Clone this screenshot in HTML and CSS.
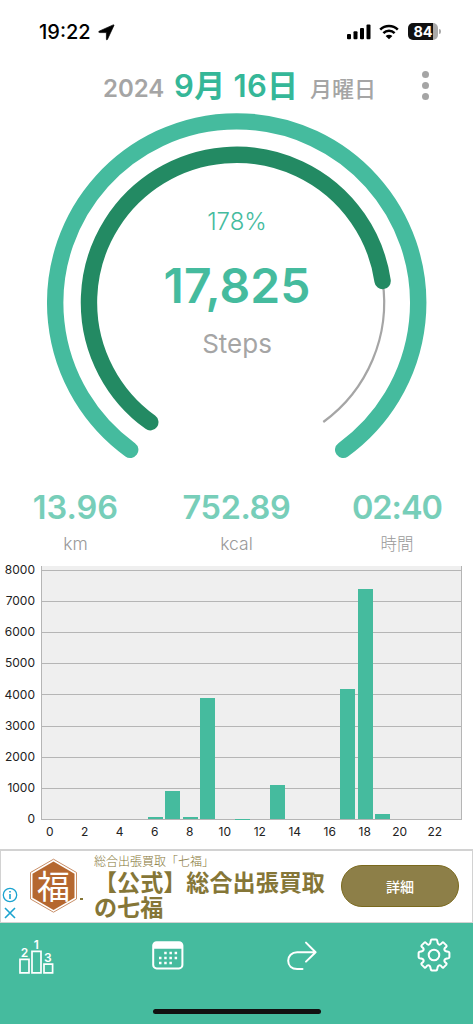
FILE: index.html
```
<!DOCTYPE html>
<html lang="ja">
<head>
    <meta charset="UTF-8">
    <meta name="viewport" content="width=device-width, initial-scale=1.0">
    <title>歩数計</title>
    <link rel="stylesheet" href="styles.css">
</head>
<body>
    <div class="app">
        <header class="status-bar">
            <div class="status-left">
                <span class="clock">19:22</span>
                <svg width="17" height="17" viewBox="0 0 17 17"><path d="M1.1 7.2 15.2.9q1-.3.7.7L9.4 15.5q-.7 1-1-.2V8.6H1.7Q0 8.3 1.1 7.2z" fill="#000" stroke="#000" stroke-width="0.7"/></svg>
            </div>
            <div class="status-right">
                <svg width="24" height="16" viewBox="0 0 24 16"><rect x="0" y="10" width="4" height="5.3" rx="1"/><rect x="6.5" y="7.2" width="4" height="8.1" rx="1"/><rect x="13" y="4" width="4" height="11.3" rx="1"/><rect x="19.5" y="0.4" width="4" height="14.9" rx="1"/></svg>
                <svg class="wifi" width="20" height="16" viewBox="0 0 20 16"><path d="M1.2 5.6a12.4 12.4 0 0 1 17.6 0M4.4 9.1a7.9 7.9 0 0 1 11.2 0" fill="none" stroke="#000" stroke-width="2.5"/><path d="M6.6 12a4.9 4.9 0 0 1 6.8 0L10 15.3z"/></svg>
                <div class="battery"><span>84</span></div>
            </div>
        </header>

        <div class="date-row">
            <span class="year">2024</span>
            <span class="day">9月 16日</span>
            <span class="weekday">月曜日</span>
            <div class="more"><i></i><i></i><i></i></div>
        </div>

        <section class="gauge">
            <svg width="474" height="370" viewBox="0 100 474 370" fill="none">
                <path d="M130.2 449.8A181.5 181.5 0 1 1 343.2 449.8" stroke="#45bb9e" stroke-width="16.4" stroke-linecap="round"/>
                <path d="M382.6 281A147.8 147.8 0 0 1 323.3 422" stroke="#a5a5a5" stroke-width="2.2"/>
                <path d="M150.3 422.2A147.6 147.6 0 1 1 382.6 281" stroke="#238a63" stroke-width="16.4" stroke-linecap="round"/>
            </svg>
            <div class="gauge-text">
                <div class="percent">178%</div>
                <div class="steps">17,825</div>
                <div class="unit">Steps</div>
            </div>
        </section>

        <section class="stats">
            <div class="stat"><b>13.96</b><span>km</span></div>
            <div class="stat"><b>752.89</b><span>kcal</span></div>
            <div class="stat"><b>02:40</b><span>時間</span></div>
        </section>

        <section class="chart">
            <div class="y-axis">
                <span>8000</span><span>7000</span><span>6000</span><span>5000</span><span>4000</span><span>3000</span><span>2000</span><span>1000</span><span>0</span>
            </div>
            <div class="plot">
                <div class="bar"></div>
                <div class="bar"></div>
                <div class="bar"></div>
                <div class="bar"></div>
                <div class="bar"></div>
                <div class="bar"></div>
                <div class="bar" style="height: 1.7px"></div>
                <div class="bar" style="height: 28px"></div>
                <div class="bar" style="height: 2.4px"></div>
                <div class="bar" style="height: 121.5px"></div>
                <div class="bar"></div>
                <div class="bar" style="height: 0.5px"></div>
                <div class="bar"></div>
                <div class="bar" style="height: 34.3px"></div>
                <div class="bar"></div>
                <div class="bar"></div>
                <div class="bar"></div>
                <div class="bar" style="height: 129.7px"></div>
                <div class="bar" style="height: 230.3px"></div>
                <div class="bar" style="height: 4.7px"></div>
                <div class="bar"></div>
                <div class="bar"></div>
                <div class="bar"></div>
                <div class="bar"></div>
            </div>
            <div class="x-axis">
                <span>0</span><span>2</span><span>4</span><span>6</span><span>8</span><span>10</span><span>12</span><span>14</span><span>16</span><span>18</span><span>20</span><span>22</span>
            </div>
        </section>

        <aside class="ad">
            <div class="ad-marks">
                <svg width="16" height="16" viewBox="0 0 16 16" fill="none" stroke="#1ba3cf" stroke-width="1.3"><circle cx="8" cy="8" r="6.7"/><path d="M8 7v5M8 4v1.6" stroke-width="1.6"/></svg>
                <svg width="16" height="16" viewBox="0 0 16 16" fill="none" stroke="#1ba3cf" stroke-width="1.6"><path d="M3 3l10 10M13 3L3 13"/></svg>
            </div>
            <div class="ad-logo">
                <svg width="56" height="56" viewBox="0 0 56 56">
                    <path d="M26.5 1.2 49.5 14.5V41L26.5 54.2 3.5 41V14.5z" fill="#fff" stroke="#c98f68" stroke-width="1"/>
                    <path d="M26.5 3.6 47.5 15.7V39.8L26.5 51.9 5.5 39.8V15.7z" fill="#b5672f"/>
                    <rect x="53" y="40" width="3" height="2" fill="#857637"/>
                </svg>
                <span>福</span>
            </div>
            <div class="ad-text">
                <small>総合出張買取「七福」</small>
                <strong>【公式】総合出張買取<br>の七福</strong>
            </div>
            <button class="ad-button">詳細</button>
        </aside>

        <nav class="tab-bar">
            <svg class="ranking" width="36" height="38" viewBox="0 0 36 38" fill="none" stroke="#fff" stroke-width="1.7">
                <path d="M2 23.4h9v13.4H2zM14 15.4h9v21.4h-9zM26 28.1h8.6v8.7H26z"/>
                <g fill="#fff" stroke="none" class="rank"><text x="6.4" y="21">2</text><text x="18.2" y="12.5">1</text><text x="29.9" y="25.8">3</text></g>
            </svg>
            <svg width="32" height="29" viewBox="0 0 32 29">
                <rect x="1.2" y="1.2" width="29.2" height="26.2" rx="3.4" fill="none" stroke="#fff" stroke-width="2"/>
                <path d="M1.2 7.7V4q0-3 3-3h23.2q3 0 3 3v3.7z" fill="#fff"/>
                <path d="M12.2 12h12.9M7 17h18.1M7 22h12.9" stroke="#fff" stroke-width="2.5" stroke-dasharray="2.5 2.7"/>
            </svg>
            <svg class="share" width="32" height="32" viewBox="0 0 32 32" fill="none" stroke="#fff" stroke-width="2" stroke-linecap="round" stroke-linejoin="round"><path d="M16.5 29h-5.3C5.6 29 2.2 25.6 2.2 20.8S5.6 12.2 11.2 12.2H29.6M20 2.6l9.6 9.6-9.6 9.4"/></svg>
            <svg width="34" height="34" viewBox="-17 -17 34 34" fill="none" stroke="#fff" stroke-width="2" stroke-linejoin="round">
                <circle r="5.3"/>
                <path d="M-2.2-15.4H2.2Q3-15.4 3.2-14.3C3.7-9.8 6-9.2 8.1-12.2Q8.8-13 9.6-12.4L12.4-9.6Q13-8.8 12.2-8.1C9.2-6 9.8-3.7 14.3-3.2Q15.4-3 15.4-2.2V2.2Q15.4 3 14.3 3.2C9.8 3.7 9.2 6 12.2 8.1Q13 8.8 12.4 9.6L9.6 12.4Q8.8 13 8.1 12.2C6 9.2 3.7 9.8 3.2 14.3Q3 15.4 2.2 15.4H-2.2Q-3 15.4-3.2 14.3C-3.7 9.8-6 9.2-8.1 12.2Q-8.8 13-9.6 12.4L-12.4 9.6Q-13 8.8-12.2 8.1C-9.2 6-9.8 3.7-14.3 3.2Q-15.4 3-15.4 2.2V-2.2Q-15.4-3-14.3-3.2C-9.8-3.7-9.2-6-12.2-8.1Q-13-8.8-12.4-9.6L-9.6-12.4Q-8.8-13-8.1-12.2C-6-9.2-3.7-9.8-3.2-14.3Q-3-15.4-2.2-15.4z"/>
            </svg>
            <div class="home-indicator"></div>
        </nav>
    </div>
</body>
</html>
```
FILE: styles.css
```
body {
    margin: 0;
    background-color: #fff;
    font-family: Inter, "Noto Sans CJK JP", sans-serif;
}
svg {
    display: block;
}
.app {
    width: 474px;
    height: 1024px;
    overflow: hidden;
}
.status-bar {
    display: flex;
    justify-content: space-between;
    align-items: center;
    height: 64px;
    box-sizing: border-box;
    padding: 0 36px 0 39px;
}
.status-left,
.status-right {
    display: flex;
    align-items: center;
}
.status-right {
    padding-bottom: 1px;
}
.clock {
    font-size: 20px;
    font-weight: 500;
    margin-right: 7px;
}
.wifi {
    margin: 0 9px 0 8px;
}
.battery {
    position: relative;
    width: 30px;
    height: 17px;
    border-radius: 5px;
    background: linear-gradient(to right, #111 84%, #aaa 84%);
    color: #fff;
    font-size: 14.5px;
    font-weight: 700;
    line-height: 17px;
    text-align: center;
}
.battery::after {
    content: "";
    position: absolute;
    right: -3px;
    top: 6px;
    width: 2px;
    height: 5px;
    border-radius: 0 2px 2px 0;
    background-color: #aaa;
}
.date-row {
    display: flex;
    align-items: baseline;
    height: 36px;
    padding-left: 103px;
    color: #a5a5a5;
    line-height: 44px;
    white-space: nowrap;
}
.year {
    width: 71px;
    font-size: 24px;
    font-weight: 600;
}
.day {
    width: 136px;
    font-size: 31px;
    font-weight: 600;
    letter-spacing: 0.3px;
    color: #35b798;
}
.weekday {
    font-size: 22px;
    font-weight: 500;
}
.more {
    display: flex;
    flex-direction: column;
    align-self: flex-start;
    gap: 4px;
    margin: 7px 0 0 46px;
}
.more i {
    width: 7px;
    height: 7px;
    border-radius: 50%;
    background-color: #a5a5a5;
}
.gauge {
    display: grid;
    height: 370px;
}
.gauge > * {
    grid-area: 1 / 1;
}
.gauge-text {
    padding-top: 107px;
    text-align: center;
    color: #45bb9e;
}
.percent {
    font-size: 24px;
    font-weight: 300;
    line-height: 30px;
}
.steps {
    margin-top: 19px;
    font-size: 48px;
    font-weight: 600;
    line-height: 60px;
}
.unit {
    margin-top: 13px;
    font-size: 26px;
    line-height: 30px;
    color: #a5a5a5;
}
.stats {
    display: flex;
    height: 96px;
}
.stat {
    display: flex;
    flex-direction: column;
    align-items: center;
    width: 171px;
    padding-top: 18px;
}
.stat:first-child {
    width: 151px;
}
.stat:last-child {
    width: 150px;
}
.stat b {
    font-size: 32.5px;
    font-weight: 600;
    line-height: 40px;
    letter-spacing: -0.4px;
    color: #77ceb9;
}
.stat:first-child b {
    letter-spacing: 0;
}
.stat:last-child b {
    letter-spacing: -1px;
}
.stat span {
    margin-top: 4px;
    font-size: 17.5px;
    font-weight: 300;
    line-height: 24px;
    color: #999;
}
.stat:last-child span {
    font-size: 16.5px;
}
.chart {
    display: grid;
    grid-template-columns: 41px 421px;
    grid-template-rows: 254px 29px;
    height: 283px;
    font-size: 12px;
    color: #222;
}
.y-axis {
    display: flex;
    flex-direction: column;
    margin-top: -12px;
    padding-right: 6px;
    text-align: right;
}
.y-axis span {
    height: 31.16px;
    line-height: 31.16px;
    flex-shrink: 0;
}
.plot {
    display: grid;
    grid-template-columns: repeat(24, 17.5px);
    align-items: end;
    box-sizing: border-box;
    border: solid #b5b5b5;
    border-width: 0 1px 1px;
    background: repeating-linear-gradient(to top, transparent 0 30.16px, #b5b5b5 30.16px 31.16px) #efefef;
}
.bar {
    width: 15px;
    margin-left: 0.6px;
    background-color: #45bb9e;
}
.x-axis {
    grid-column: 2;
    display: grid;
    grid-template-columns: repeat(12, 35px);
    padding-top: 3px;
    line-height: 18px;
}
.x-axis span {
    display: flex;
    justify-content: center;
    width: 17.5px;
}
.ad {
    display: flex;
    height: 74px;
    width: 473px;
    box-sizing: border-box;
    border: 1px solid #d2d2d2;
    border-top-width: 2px;
    color: #857637;
    font-family: "Noto Sans CJK JP", sans-serif;
}
.ad-marks {
    margin: 36px 0 0 1px;
    display: flex;
    flex-direction: column;
    gap: 2px;
}
.ad-logo {
    display: grid;
    place-items: center;
    width: 56px;
    height: 56px;
    margin: 7px 0 0 9px;
}
.ad-logo > * {
    grid-area: 1 / 1;
}
.ad-logo span {
    margin: 0 3px 2px 0;
    font-size: 33px;
    font-weight: 400;
    line-height: 50px;
    color: #fff;
}
.ad-text {
    width: 247px;
    padding-left: 11px;
    white-space: nowrap;
    box-sizing: border-box;
}
.ad-text small {
    display: block;
    margin-top: 1px;
    font-size: 12px;
    font-weight: 300;
    line-height: 18px;
}
.ad-text strong {
    display: block;
    margin-top: -1px;
    font-size: 23.1px;
    font-weight: 700;
    line-height: 25px;
}
.ad-button {
    width: 118px;
    height: 42px;
    margin: 14px 0 0 11px;
    border: 1px solid #7a691d;
    border-radius: 21px;
    background-color: #8d7f48;
    color: #fff;
    font-family: inherit;
    font-size: 14px;
    font-weight: 500;
}
.tab-bar {
    position: relative;
    display: grid;
    grid-template-columns: 134px 134px 131px 34px;
    align-items: center;
    width: 473px;
    height: 101px;
    box-sizing: border-box;
    padding: 0 22px 37px 18px;
    background-color: #45bb9e;
}
.ranking {
    margin-top: -1px;
}
.share {
    margin-top: 2px;
}
.rank {
    font-size: 12px;
    font-weight: 600;
    text-anchor: middle;
}
.home-indicator {
    position: absolute;
    left: 153px;
    bottom: 10px;
    width: 168px;
    height: 5px;
    border-radius: 3px;
    background-color: #111;
}
```
